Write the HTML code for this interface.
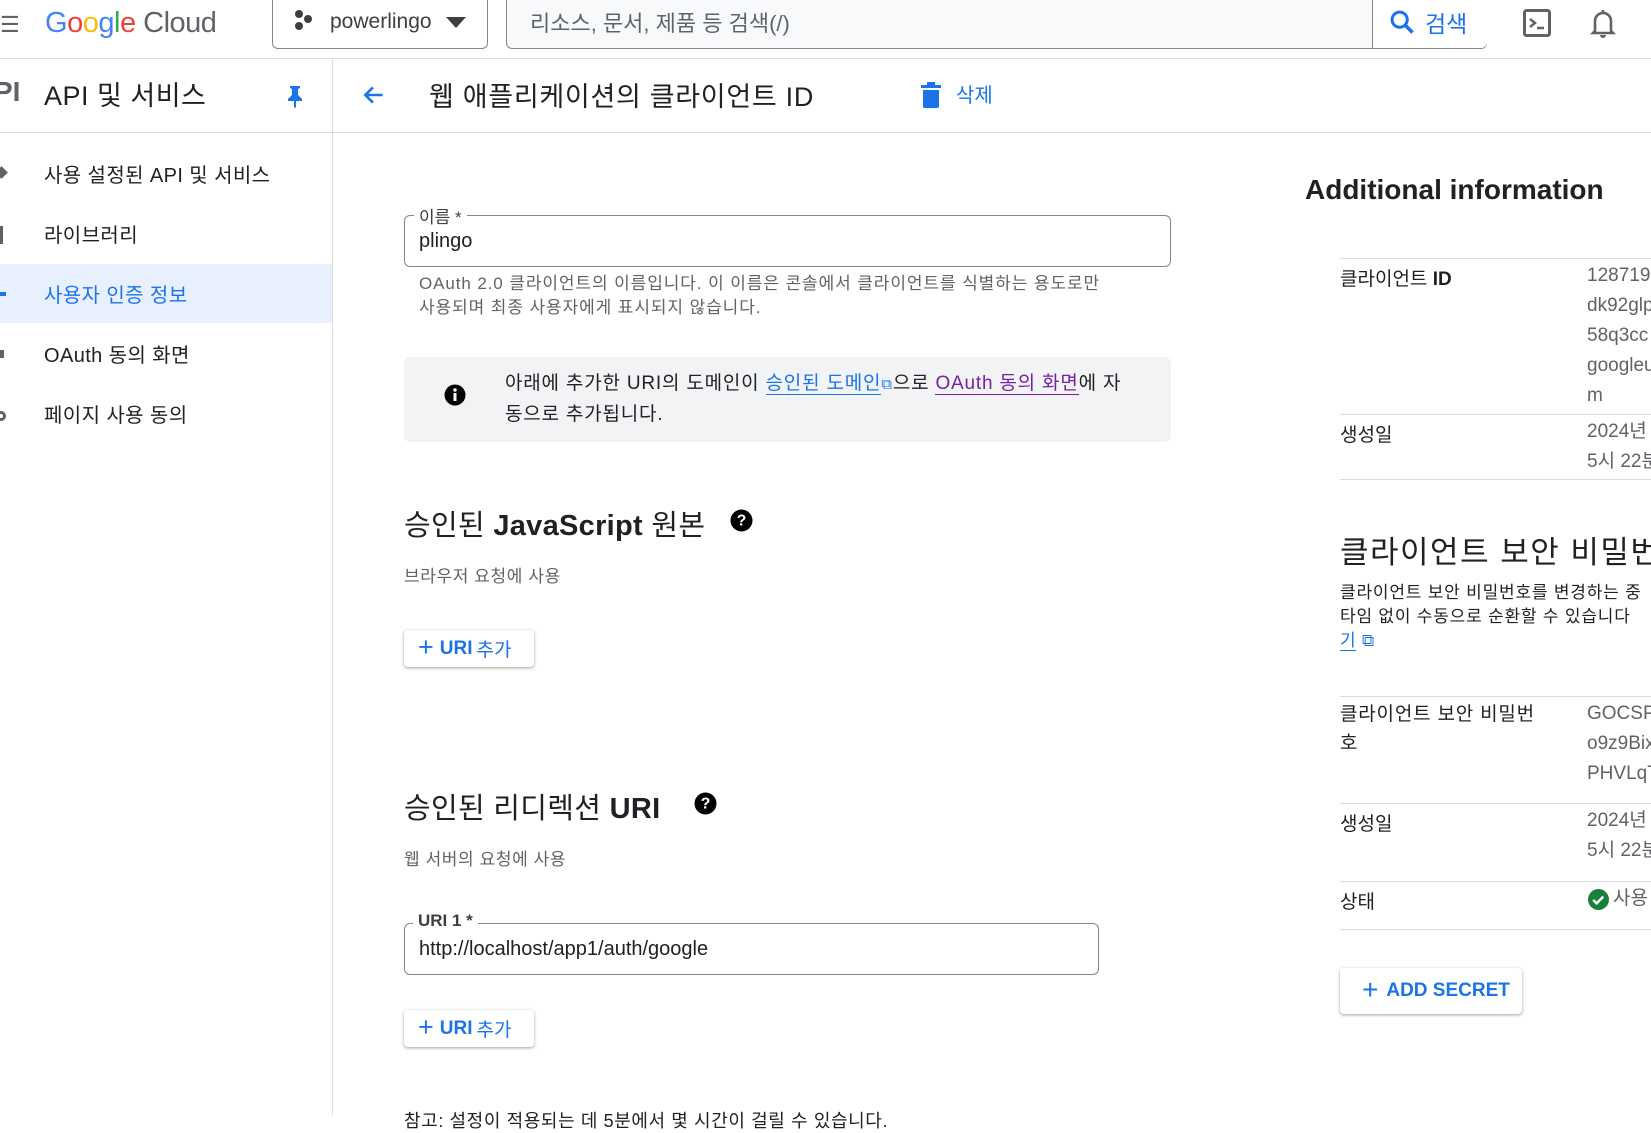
<!DOCTYPE html>
<html><head><meta charset="utf-8"><style>
*{box-sizing:border-box;margin:0;padding:0}
body{width:1651px;height:1115px;overflow:hidden;position:relative;background:#fff;font-family:"Liberation Sans","Noto Sans CJK KR",sans-serif;color:#202124}
.a{position:absolute;white-space:nowrap}
.blue{color:#1a73e8}
.btn{position:absolute;background:#fff;border-radius:4px;box-shadow:0 1px 2px rgba(60,64,67,.3),0 1px 3px 1px rgba(60,64,67,.15);color:#1a73e8;font-weight:bold;font-size:19px;display:flex;align-items:center}
.row{position:absolute;left:1340px;right:0;border-top:1px solid #dadce0}
.val{color:#5f6368;font-size:19px;line-height:30px}
.nav{font-size:20px;letter-spacing:0.4px}
</style></head><body>
<!-- header -->
<div class="a" style="left:0;top:12px;font-size:22px;color:#5f6368">☰</div>
<div class="a" style="left:45px;top:7px;font-size:29px;letter-spacing:-0.5px"><span style="color:#4285f4">G</span><span style="color:#ea4335">o</span><span style="color:#fbbc04">o</span><span style="color:#4285f4">g</span><span style="color:#34a853">l</span><span style="color:#ea4335">e</span> <span style="color:#5f6368">Cloud</span></div>
<div class="a" style="left:272px;top:-6px;width:216px;height:55px;border:1px solid #80868b;border-radius:6px"></div>
<svg class="a" style="left:293px;top:10px" width="24" height="22" viewBox="0 0 24 22"><circle cx="6" cy="4" r="4" fill="#3c4043"/><circle cx="15" cy="9" r="4" fill="#3c4043"/><circle cx="6" cy="16" r="4" fill="#3c4043"/></svg>
<div class="a" style="left:330px;top:10px;font-size:21px;color:#3c4043">powerlingo</div>
<svg class="a" style="left:446px;top:17px" width="20" height="11"><path d="M0 0h20L10 11z" fill="#3c4043"/></svg>
<div class="a" style="left:506px;top:-6px;width:981px;height:55px;border:1px solid #80868b;border-radius:6px;background:#f8f9fa"></div>
<div class="a" style="left:1372px;top:0;width:115px;height:48px;background:#fff;border-left:1px solid #80868b;border-radius:0 0 6px 0"></div>
<div class="a" style="left:530px;top:6px;font-size:22px;color:#5f6368">리소스, 문서, 제품 등 검색(/)</div>
<svg class="a" style="left:1388px;top:8px" width="28" height="28" viewBox="0 0 24 24"><circle cx="10" cy="10" r="6.5" fill="none" stroke="#1a73e8" stroke-width="2.6"/><path d="M15 15l6 6" stroke="#1a73e8" stroke-width="3"/></svg>
<div class="a blue" style="left:1425px;top:5px;font-size:23px">검색</div>
<svg class="a" style="left:1523px;top:9px" width="28" height="28" viewBox="0 0 28 28"><rect x="1.5" y="1.5" width="25" height="25" rx="2" fill="none" stroke="#5f6368" stroke-width="3"/><path d="M7 10l5 4-5 4" fill="none" stroke="#5f6368" stroke-width="2.5"/><path d="M14 19h7" stroke="#5f6368" stroke-width="2.5"/></svg>
<svg class="a" style="left:1590px;top:7px" width="26" height="32" viewBox="0 0 26 32"><path d="M13 3v2M5 24V14a8 8 0 0116 0v10l2 2H3z" fill="none" stroke="#5f6368" stroke-width="2.6"/><path d="M10 28a3 3 0 006 0" fill="#5f6368"/></svg>
<div class="a" style="left:0;top:58px;width:1651px;height:1px;background:#dadce0"></div>
<!-- sidebar -->
<div class="a" style="left:332px;top:58px;width:1px;height:1057px;background:#dadce0"></div>
<div class="a" style="left:-6px;top:76px;font-size:28px;font-weight:bold;color:#5f6368">PI</div>
<div class="a" style="left:44px;top:74px;font-size:27px;letter-spacing:0.5px">API 및 서비스</div>
<svg class="a" style="left:285px;top:84px" width="20" height="24" viewBox="0 0 20 24"><path d="M5 2h10v2l-2 1v6l4 4v2h-6v6l-1 1-1-1v-6H3v-2l4-4V5L5 4z" fill="#1a73e8"/></svg>
<div class="a" style="left:0;top:132px;width:332px;height:1px;background:#dadce0"></div>
<div class="a" style="left:0;top:264px;width:332px;height:59px;background:#e8f0fe"></div>
<div class="a nav" style="left:44px;top:159px">사용 설정된 API 및 서비스</div>
<div class="a nav" style="left:44px;top:219px">라이브러리</div>
<div class="a nav" style="left:44px;top:279px;color:#1a73e8">사용자 인증 정보</div>
<div class="a nav" style="left:44px;top:339px">OAuth 동의 화면</div>
<div class="a nav" style="left:44px;top:399px">페이지 사용 동의</div>
<div class="a" style="left:-3px;top:168px;width:9px;height:9px;background:#5f6368;transform:rotate(45deg)"></div>
<div class="a" style="left:0;top:226px;width:5px;height:18px;border-left:3px solid #5f6368"></div>
<div class="a" style="left:0;top:292px;width:6px;height:4px;background:#1a73e8"></div>
<div class="a" style="left:0;top:350px;width:4px;height:8px;background:#5f6368"></div>
<div class="a" style="left:-4px;top:411px;width:10px;height:10px;border-radius:50%;border:3px solid #5f6368"></div>
<!-- title bar -->
<svg class="a" style="left:361px;top:82px" width="26" height="26" viewBox="0 0 24 24"><path d="M20 12H5M11 5l-7 7 7 7" fill="none" stroke="#1a73e8" stroke-width="2.4"/></svg>
<div class="a" style="left:429px;top:75px;font-size:27px;letter-spacing:0.7px">웹 애플리케이션의 클라이언트 ID</div>
<svg class="a" style="left:920px;top:81px" width="22" height="28" viewBox="0 0 22 28"><rect x="1" y="4" width="20" height="3" fill="#1a73e8"/><rect x="7" y="1" width="8" height="3" fill="#1a73e8"/><path d="M3 9h16v16a2 2 0 01-2 2H5a2 2 0 01-2-2z" fill="#1a73e8"/></svg>
<div class="a blue" style="left:956px;top:79px;font-size:20px">삭제</div>
<div class="a" style="left:333px;top:132px;width:1318px;height:1px;background:#dadce0"></div>
<!-- name field -->
<div class="a" style="left:404px;top:215px;width:767px;height:52px;border:1px solid #80868b;border-radius:6px"></div>
<div class="a" style="left:414px;top:203px;background:#fff;padding:0 5px;font-size:17px;color:#3c4043">이름 *</div>
<div class="a" style="left:419px;top:230px;font-size:20px">plingo</div>
<div class="a" style="left:419px;top:272px;font-size:17px;line-height:24px;color:#5f6368;letter-spacing:0.9px">OAuth 2.0 클라이언트의 이름입니다. 이 이름은 콘솔에서 클라이언트를 식별하는 용도로만<br>사용되며 최종 사용자에게 표시되지 않습니다.</div>
<!-- info box -->
<div class="a" style="left:404px;top:357px;width:767px;height:85px;background:#f1f3f4;border-radius:6px"></div>
<svg class="a" style="left:444px;top:384px" width="22" height="22" viewBox="0 0 22 22"><circle cx="11" cy="11" r="10.5" fill="#000"/><rect x="9.5" y="9" width="3" height="8" fill="#fff"/><circle cx="11" cy="6" r="1.7" fill="#fff"/></svg>
<div class="a" style="left:505px;top:369px;font-size:19px;line-height:30px;letter-spacing:0.8px">아래에 추가한 URI의 도메인이 <span style="color:#1a73e8;border-bottom:1px solid #1a73e8">승인된 도메인</span><span style="color:#1a73e8;font-size:15px">⧉</span>으로 <span style="color:#7b1fa2;border-bottom:1px solid #7b1fa2">OAuth 동의 화면</span>에 자<br>동으로 추가됩니다.</div>
<!-- JS origins -->
<div class="a" style="left:404px;top:502px;font-size:29px;letter-spacing:0.3px">승인된 <b style="font-weight:600">JavaScript</b> 원본</div>
<svg class="a" style="left:730px;top:509px" width="23" height="23" viewBox="0 0 22 22"><circle cx="11" cy="11" r="10.5" fill="#000"/><text x="11" y="16" text-anchor="middle" font-size="15" font-weight="bold" fill="#fff" font-family="Liberation Sans">?</text></svg>
<div class="a" style="left:404px;top:562px;font-size:17px;color:#5f6368;letter-spacing:0.6px">브라우저 요청에 사용</div>
<div class="btn" style="left:404px;top:630px;width:130px;height:37px;padding-left:14px"><span style="font-size:27px;font-weight:normal;margin-right:6px;margin-top:-3px">+</span>URI <span style="font-weight:normal;margin-left:4px">추가</span></div>
<!-- redirect -->
<div class="a" style="left:404px;top:785px;font-size:29px;letter-spacing:0.3px">승인된 리디렉션 <b style="font-weight:600">URI</b></div>
<svg class="a" style="left:694px;top:792px" width="23" height="23" viewBox="0 0 22 22"><circle cx="11" cy="11" r="10.5" fill="#000"/><text x="11" y="16" text-anchor="middle" font-size="15" font-weight="bold" fill="#fff" font-family="Liberation Sans">?</text></svg>
<div class="a" style="left:404px;top:845px;font-size:17px;color:#5f6368;letter-spacing:0.6px">웹 서버의 요청에 사용</div>
<div class="a" style="left:404px;top:923px;width:695px;height:52px;border:1px solid #80868b;border-radius:6px"></div>
<div class="a" style="left:413px;top:911px;background:#fff;padding:0 5px;font-size:17px;font-weight:bold;color:#3c4043">URI 1 *</div>
<div class="a" style="left:419px;top:938px;font-size:20px">http://localhost/app1/auth/google</div>
<div class="btn" style="left:404px;top:1010px;width:130px;height:37px;padding-left:14px"><span style="font-size:27px;font-weight:normal;margin-right:6px;margin-top:-3px">+</span>URI <span style="font-weight:normal;margin-left:4px">추가</span></div>
<div class="a" style="left:404px;top:1107px;font-size:18px;letter-spacing:0.6px">참고: 설정이 적용되는 데 5분에서 몇 시간이 걸릴 수 있습니다.</div>
<!-- right panel -->
<div class="a" style="left:1305px;top:174px;font-size:28px;font-weight:bold">Additional information</div>
<div class="row" style="top:258px"></div>
<div class="row" style="top:414px"></div>
<div class="row" style="top:479px"></div>
<div class="a" style="left:1340px;top:264px;font-size:19px">클라이언트 <b>ID</b></div>
<div class="a val" style="left:1587px;top:261px">128719<br>dk92glp<br>58q3cc<br>googleu<br>m</div>
<div class="a" style="left:1340px;top:420px;font-size:19px">생성일</div>
<div class="a val" style="left:1587px;top:417px">2024년<br>5시 22분</div>
<div class="a" style="left:1340px;top:527px;font-size:31px;letter-spacing:1.5px">클라이언트 보안 비밀번호</div>
<div class="a" style="left:1340px;top:581px;font-size:17px;line-height:24px;letter-spacing:0.8px">클라이언트 보안 비밀번호를 변경하는 중<br>타임 없이 수동으로 순환할 수 있습니다<br><span style="color:#1a73e8;border-bottom:1px solid #1a73e8">기</span><span style="color:#1a73e8"> ⧉</span></div>
<div class="row" style="top:696px"></div>
<div class="row" style="top:803px"></div>
<div class="row" style="top:881px"></div>
<div class="row" style="top:929px"></div>
<div class="a" style="left:1340px;top:700px;font-size:19px;line-height:29px;letter-spacing:0.8px">클라이언트 보안 비밀번<br>호</div>
<div class="a val" style="left:1587px;top:699px">GOCSPX<br>o9z9Bix<br>PHVLqT</div>
<div class="a" style="left:1340px;top:809px;font-size:19px">생성일</div>
<div class="a val" style="left:1587px;top:806px">2024년<br>5시 22분</div>
<div class="a" style="left:1340px;top:887px;font-size:19px">상태</div>
<svg class="a" style="left:1588px;top:889px" width="21" height="21" viewBox="0 0 22 22"><circle cx="11" cy="11" r="11" fill="#188038"/><path d="M5.5 11.5l3.5 3.5 7-7" fill="none" stroke="#fff" stroke-width="2.6"/></svg>
<div class="a val" style="left:1613px;top:884px">사용</div>
<div class="btn" style="left:1340px;top:968px;width:182px;height:46px;padding-left:22px;font-size:19px"><span style="font-size:28px;font-weight:normal;margin-right:8px;margin-top:-3px">+</span>ADD SECRET</div>
</body></html>
